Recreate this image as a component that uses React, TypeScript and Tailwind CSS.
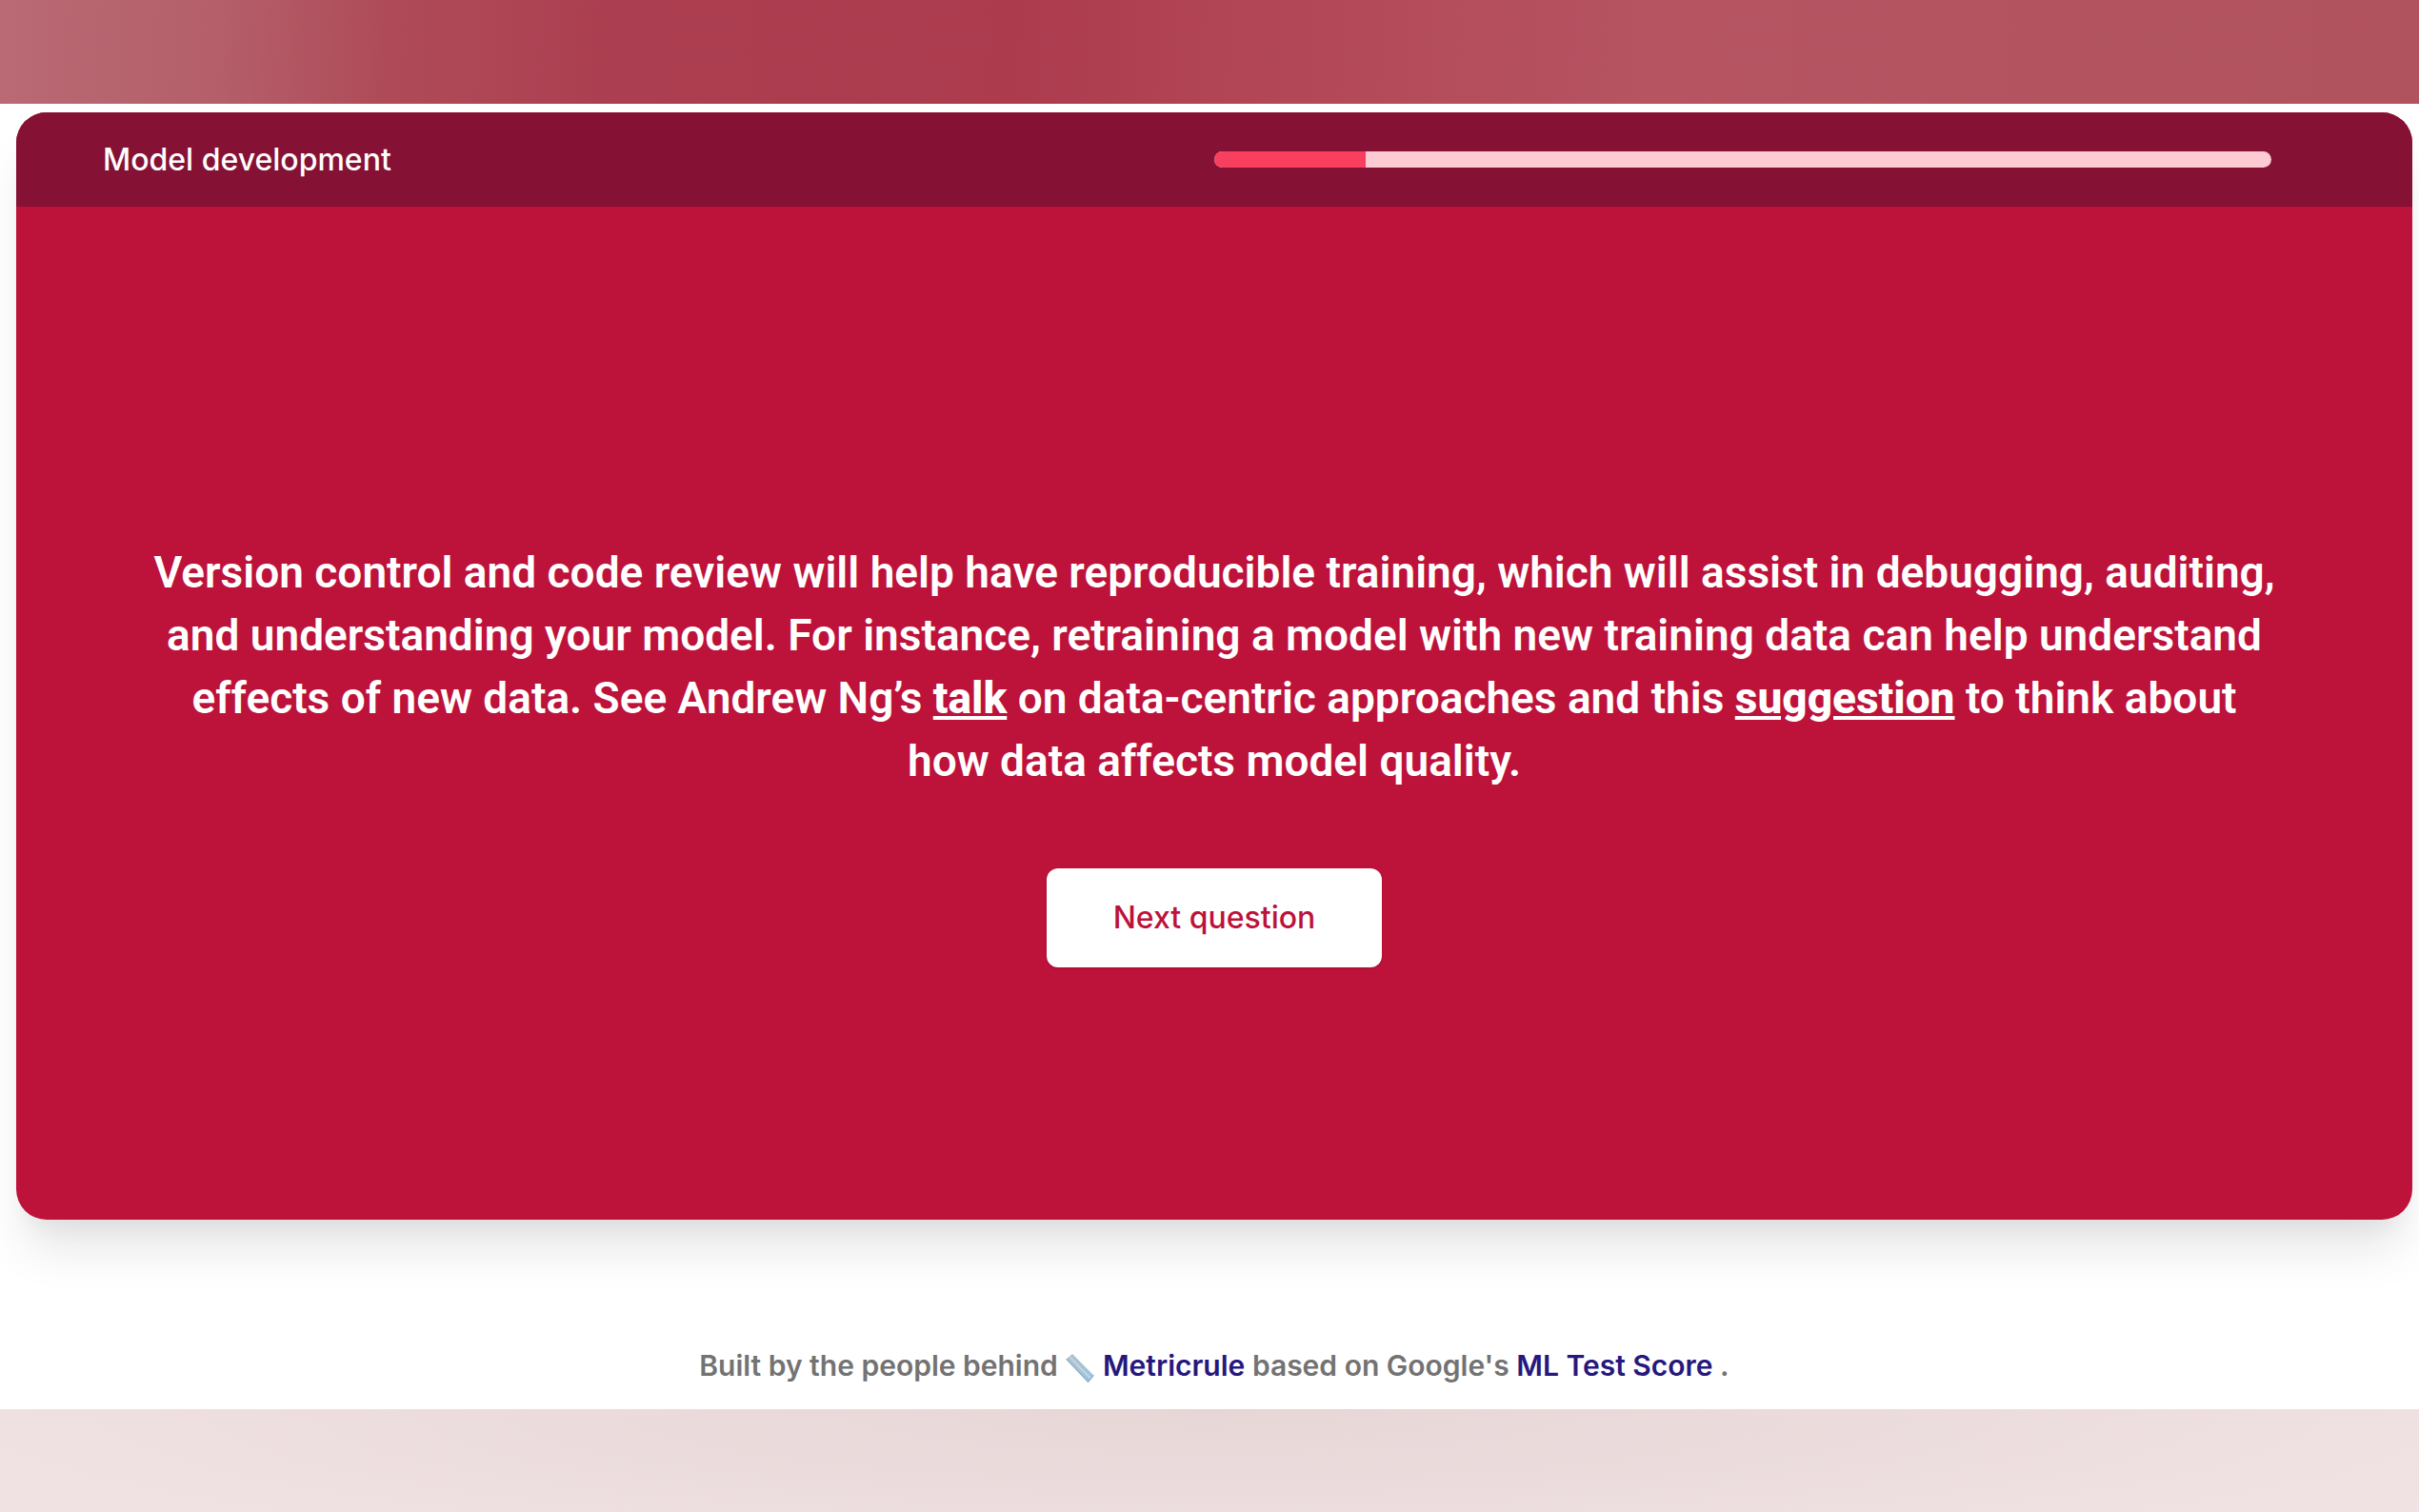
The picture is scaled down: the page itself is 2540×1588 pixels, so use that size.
const progress = { answered: 1, total: 7 };

function RulerIcon() {
  return (
    <svg viewBox="0 0 30 30" className="inline-block size-8 align-middle" aria-hidden="true">
      <defs>
        <linearGradient id="ruler" x1="0" y1="0" x2="1" y2="1">
          <stop offset="0" stopColor="#b3bfca" />
          <stop offset="1" stopColor="#9cc3dc" />
        </linearGradient>
      </defs>
      <path d="M1.500 6 L7.500 1 L28.500 22 L23 28.500 Z" fill="url(#ruler)" />
      <path d="M5.500 4.500 L25 24.500" stroke="#c0d6e5" strokeWidth="2" />
      <path d="M1.500 6 L23 28.500 L28.500 22" stroke="#8badc4" strokeWidth="1" fill="none" />
    </svg>
  );
}

function Header() {
  const percent = (progress.answered / progress.total) * 100;

  return (
    <header className="grid grid-cols-2 items-center bg-[#851134] py-7">
      <h1 className="pl-[91px] text-[32px] leading-[43px] font-medium">
        Model development
      </h1>

      <div className="pr-[148px]">
        <div
          role="progressbar"
          aria-label="Progress"
          aria-valuenow={progress.answered}
          aria-valuemax={progress.total}
          className="h-[17px] overflow-hidden rounded-full bg-[#ffcbd2]"
        >
          <div className="h-full bg-[#f83f60]" style={{ width: `${percent}%` }} />
        </div>
      </div>
    </header>
  );
}

export default function App() {
  return (
    <div className="flex min-h-screen flex-col bg-white font-['Inter',sans-serif] antialiased">
      {/* top band */}
      <div className="h-[109px] bg-[linear-gradient(92deg,#b96a74_0%,#b45f6a_9%,#af4b59_16%,#ab3e50_26%,#ac3b4e_42%,#b24656_52%,#b65462_68%,#b1535f_100%)]" />

      <main className="flex grow flex-col pt-[9px] pr-[7px] pl-[17px]">
        <section className="flex grow flex-col overflow-hidden rounded-[32px] bg-[#bd123a] text-white shadow-[0_40px_50px_-10px_rgba(0,0,0,0.1),0_20px_20px_-10px_rgba(0,0,0,0.04)]">
          <Header />

          <div className="flex grow flex-col items-center justify-center px-[140px] pt-[86px]">
            <p className="text-center font-['Roboto',sans-serif] text-[46px] leading-[66px] font-semibold">
              Version control and code review will help have reproducible training, which will assist in debugging, auditing, and understanding your model. For instance, retraining a model with new training data can help understand effects of new data. See Andrew Ng’s{" "}
              <a href="#talk" className="font-extrabold underline">talk</a> on data-centric approaches and this{" "}
              <a href="#suggestion" className="font-extrabold underline">suggestion</a> to think about how data affects model quality.
            </p>

            <button
              type="button"
              className="mt-20 rounded-xl bg-white px-[70px] py-[30px] text-[32px] leading-[44px] font-medium text-[#bd123a] shadow-sm"
            >
              Next question
            </button>
          </div>
        </section>

        <footer className="pt-[131px] pb-6 text-center text-[30px] leading-[44px] font-semibold text-[#737373]">
          Built by the people behind <RulerIcon />{" "}
          <a href="#metricrule" className="text-[#27187e]">Metricrule</a> based on Google's{" "}
          <a href="#ml-test-score" className="text-[#27187e]">ML Test Score</a> .
        </footer>
      </main>

      {/* bottom band */}
      <div className="h-[108px] bg-[radial-gradient(ellipse_70%_200%_at_50%_0%,#e7d6d6,#f2e4e6)]" />
    </div>
  );
}
